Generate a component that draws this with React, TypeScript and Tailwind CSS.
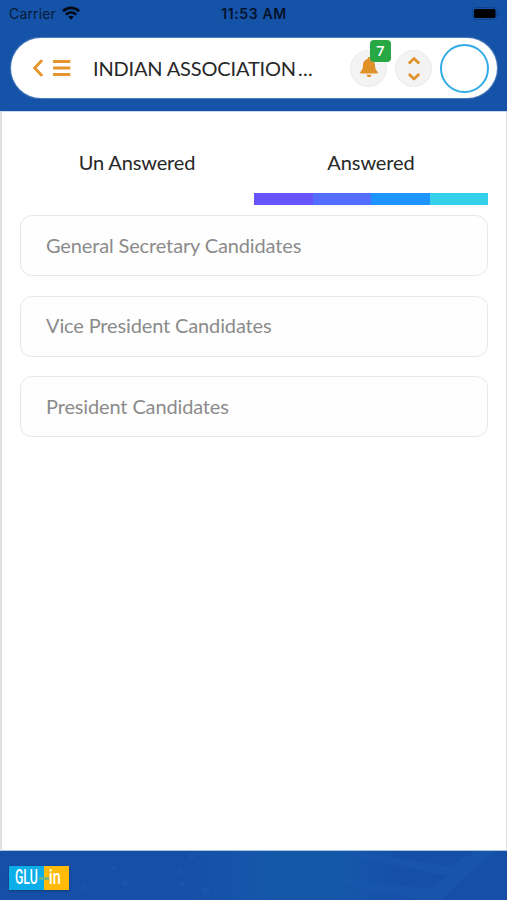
import React from "react";

const candidates = [
  "General Secretary Candidates",
  "Vice President Candidates",
  "President Candidates",
];

function StatusBar() {
  return (
    <div className="grid h-[28px] grid-cols-3 items-center pr-[7px] pl-[9px] font-['Inter',sans-serif] text-[14px] leading-[28px] text-[#071a38]">
      <div className="flex items-center gap-[6px]">
        <span className="tracking-[0.15px]">Carrier</span>
        <svg className="-mt-[2px]" width="18" height="14" viewBox="0 0 18 14" fill="none" stroke="#030a18" strokeWidth="2.7">
          <path d="M1 5.2C5.5.8 12.500.8 17 5.200" />
          <path d="M3.900 8.600C6.800 5.700 11.200 5.700 14.100 8.600" />
          <path d="M6.300 10.800C7.800 9.300 10.200 9.300 11.700 10.800L9 13.700Z" fill="#030a18" stroke="none" />
        </svg>
      </div>
      <span className="-ml-[1px] text-center font-semibold tracking-[0.6px] whitespace-nowrap text-[#04122b]">11:53 AM</span>
      <svg className="-mt-[1px] justify-self-end" width="28" height="13" viewBox="0 0 28 13">
        <rect x=".5" y=".5" width="24" height="12" rx="3" fill="none" stroke="#0f428f" />
        <rect x="2" y="2" width="21.500" height="9" rx="1.500" fill="#000" />
        <path d="M26 4.500Q28 6.500 26 8.500Z" fill="#0d3b80" />
      </svg>
    </div>
  );
}

function Header() {
  return (
    <header className="h-[111px] shrink-0 bg-[#1553a8]">
      <StatusBar />
      <div className="mt-[10px] mr-[10px] ml-[11px] flex h-[60px] items-center rounded-full bg-white pr-[7px] pl-[21px] shadow-[0_0_1px_1px_rgba(255,255,255,0.25)]">
        <svg width="40" height="18" viewBox="0 0 40 18" fill="none" stroke="#e5952d" className="shrink-0">
          <path d="M9.300 2L2.700 9L9.300 16" strokeWidth="2.900" strokeLinecap="round" />
          <path d="M21 2.500H38.300M21 9H38.300M21 15.500H38.300" strokeWidth="2.800" />
        </svg>
        <h1 className="-mt-[1px] ml-[21px] w-[257px] text-[20px] tracking-[-0.17px] whitespace-nowrap text-[#272727]">
          INDIAN ASSOCIATION<span className="ml-[2px] tracking-[0.3px]">...</span>
        </h1>
        <div className="relative flex size-[37px] shrink-0 items-center justify-center rounded-full border border-[#ebebeb] bg-[#f3f3f3]">
          <svg className="-mt-[2px]" width="18" height="21" viewBox="0 0 18 21" fill="#e1912a">
            <path d="M9 0C8.200 0 7.700.6 7.700 1.300V2C4.800 2.600 3 5 3 8C3 12 1.800 13.200.5 14.700C-.1 15.500.3 16.500 1.300 16.500H16.700C17.700 16.500 18.100 15.500 17.500 14.700C16.200 13.200 15 12 15 8C15 5 13.200 2.600 10.300 2V1.300C10.300.6 9.800 0 9 0Z" />
            <path d="M6.500 17.700H11.500C11.300 19.200 10.300 20 9 20S6.700 19.200 6.500 17.700Z" />
          </svg>
          <span className="absolute -top-[11px] left-[19px] flex h-[22px] w-[21px] items-center justify-center rounded-[4px] bg-[#28a745] font-['Open_Sans',sans-serif] text-[14.5px] font-semibold text-white">7</span>
        </div>
        <div className="ml-[8px] flex size-[37px] shrink-0 items-center justify-center rounded-full border border-[#ebebeb] bg-[#f3f3f3]">
          <svg width="14" height="25" viewBox="0 0 14 25" fill="none" stroke="#e1912a" strokeWidth="2.700">
            <path d="M1.800 7.500L7 2.500L12.200 7.500M1.800 18L7 23L12.200 18" />
          </svg>
        </div>
        <div className="ml-[8px] size-[49px] shrink-0 rounded-full border-2 border-[#32abe7] bg-white" />
      </div>
    </header>
  );
}

function Footer() {
  return (
    <footer className="relative h-[49px] shrink-0 bg-[#164fa7]">
      <svg className="absolute inset-0" width="507" height="49" viewBox="0 0 507 49">
        <defs>
          <linearGradient id="wash">
            <stop offset="0" stopColor="#1558aa" stopOpacity="0" />
            <stop offset=".4" stopColor="#1558aa" />
            <stop offset=".7" stopColor="#1558aa" />
            <stop offset="1" stopColor="#1558aa" stopOpacity="0" />
          </linearGradient>
        </defs>
        <rect x="190" width="210" height="49" fill="url(#wash)" />
        <path d="M365 2L450 15L476 0H494L440 49H420L345 34V28L430 38L447 25L360 7Z" fill="#1759ae" opacity=".5" />
        <g fill="#2464b3" opacity=".25">
          <circle cx="83" cy="36" r="3" /><circle cx="114" cy="17" r="2.500" />
          <circle cx="125" cy="32" r="3" /><circle cx="180" cy="20" r="3" />
          <circle cx="192" cy="5" r="3" /><circle cx="182" cy="33" r="3" />
          <circle cx="206" cy="40" r="4" />
        </g>
      </svg>
      <svg className="absolute top-[15px] left-[9px] shadow-[0_1px_2px_#103b75]" width="60" height="24" viewBox="0 0 60 24">
        <rect width="35" height="24" fill="#0caeea" />
        <rect x="35" width="25" height="24" fill="#ffbb08" />
        <path d="M30 12.500H40" stroke="#67b58c" strokeWidth="2.500" />
        <g fill="#fff" fontFamily="Roboto, sans-serif" fontSize="19.5" fontWeight="500">
          <text transform="translate(6 18) scale(.63 1)">GLU</text>
          <text transform="translate(40 18) scale(.74 1)">in</text>
        </g>
      </svg>
    </footer>
  );
}

export default function App() {
  return (
    <div className="flex h-[900px] w-[507px] flex-col overflow-hidden font-['Lato',sans-serif]">
      <Header />
      <main className="flex-1 border-t border-r border-b border-l-2 border-t-[#c6d8eb] border-r-[#dce3e9] border-b-[#a5c7e2] border-l-[#dddfe1] bg-white pr-[18px] pl-[18px]">
        <nav className="grid h-[93px] grid-cols-2 text-center text-[20px] text-[#272727]">
          <button className="h-[81px] pt-[18px] tracking-[-0.15px]">Un Answered</button>
          <div className="flex flex-col">
            <button className="h-[81px] pt-[18px] tracking-[-0.1px]">Answered</button>
            <div className="grid h-[12px] grid-cols-4">
              <span className="bg-[#6754fb]" />
              <span className="bg-[#536dff]" />
              <span className="bg-[#1e94ff]" />
              <span className="bg-[#34cfe9]" />
            </div>
          </div>
        </nav>
        <ul className="mt-[10px] flex flex-col gap-[19.5px]">
          {candidates.map((name) => (
            <li key={name} className="flex h-[61px] items-center rounded-[12px] border-[1.5px] border-[#e7e8e9] bg-[#fefefe] pb-[2px] pl-[25px] text-[20px] tracking-[-0.14px] text-[#8b8b8b]">
              {name}
            </li>
          ))}
        </ul>
      </main>
      <Footer />
    </div>
  );
}
